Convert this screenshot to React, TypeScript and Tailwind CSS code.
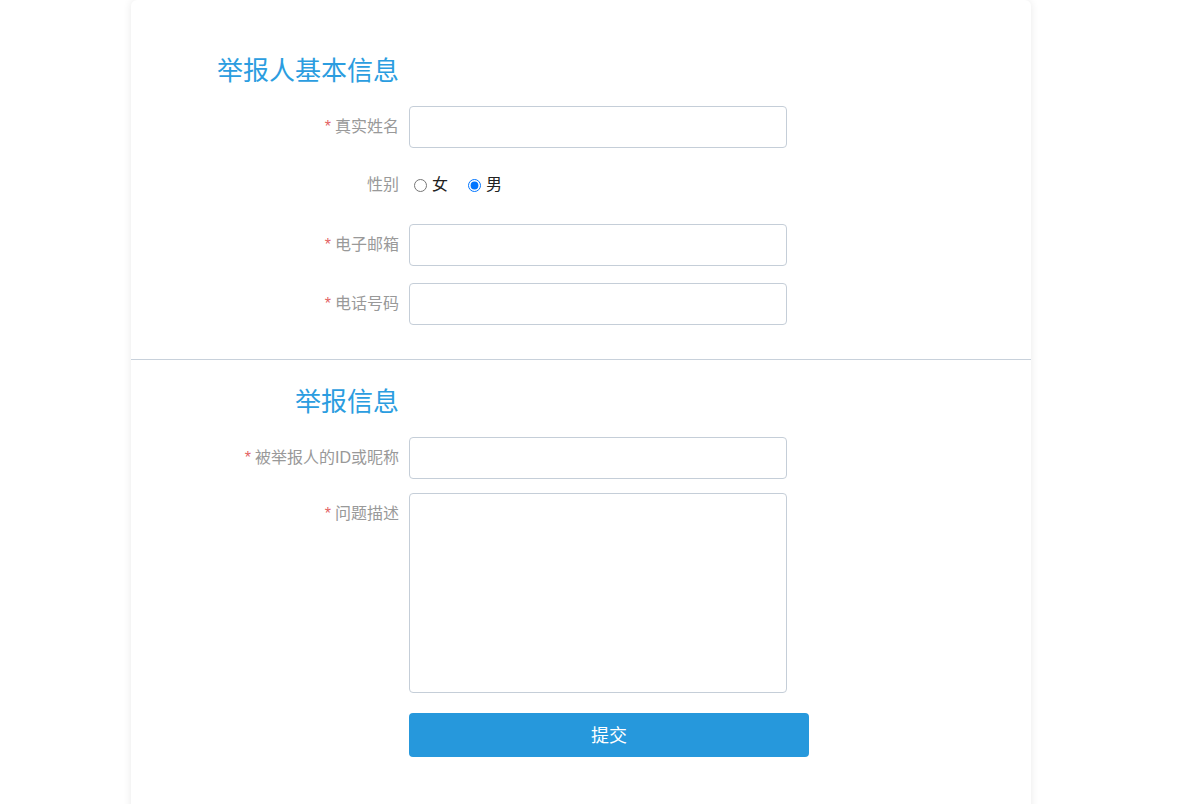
import React from "react";

const FONT = "font-['Liberation_Sans','Noto_Sans_CJK_SC',sans-serif]";

function Label({ text, required }: { text: string; required?: boolean }) {
  return (
    <div className="w-[278px] shrink-0 pr-[10px] text-right text-[16px] leading-[42px] text-[#999999]">
      {required && <span className="mr-[4px] text-[#e36363]">*</span>}
      {text}
    </div>
  );
}

function TextRow({ label, className }: { label: string; className?: string }) {
  return (
    <div className={`flex items-start ${className ?? ""}`}>
      <Label text={label} required />
      <input
        type="text"
        className="h-[42px] w-[378px] rounded-[4px] border border-[#c5ced8] bg-white px-3 text-[15px] outline-none"
      />
    </div>
  );
}

export default function App() {
  return (
    <div className={`min-h-screen bg-white ${FONT}`}>
      <div className="ml-[131px] w-[900px] rounded-t-[6px] bg-white pb-[60px] shadow-[0_0_8px_rgba(0,0,0,0.09)]">
        {/* 举报人基本信息 */}
        <div className="pt-[53px]">
          <div className="flex">
            <h2 className="w-[268px] text-right text-[26px] font-normal leading-[36px] text-[#2b9de0]">
              举报人基本信息
            </h2>
          </div>

          <TextRow label="真实姓名" className="mt-[17px]" />

          <div className="mt-[16px] flex h-[42px] items-center">
            <Label text="性别" />
            <label className="flex items-center text-[16px] text-[#222]">
              <input type="radio" name="gender" className="mx-[5px] mt-0 h-[13px] w-[13px]" />
              女
            </label>
            <label className="ml-[15px] flex items-center text-[16px] text-[#222]">
              <input
                type="radio"
                name="gender"
                defaultChecked
                className="mx-[5px] h-[13px] w-[13px]"
              />
              男
            </label>
          </div>

          <TextRow label="电子邮箱" className="mt-[18px]" />
          <TextRow label="电话号码" className="mt-[17px]" />
        </div>

        <div className="mt-[34px] h-px bg-[#c8d1db]" />

        {/* 举报信息 */}
        <div className="pt-[24px]">
          <div className="flex">
            <h2 className="w-[268px] text-right text-[26px] font-normal leading-[36px] text-[#2b9de0]">
              举报信息
            </h2>
          </div>

          <TextRow label="被举报人的ID或昵称" className="mt-[17px]" />

          <div className="mt-[14px] flex items-start">
            <Label text="问题描述" required />
            <textarea className="h-[200px] w-[378px] resize-none rounded-[4px] border border-[#c5ced8] bg-white px-3 py-2 text-[15px] outline-none" />
          </div>

          <div className="mt-[20px] flex">
            <div className="w-[278px] shrink-0" />
            <button className="h-[44px] w-[400px] rounded-[4px] bg-[#2698dc] pt-[3px] text-[18px] text-white">
              提交
            </button>
          </div>
        </div>
      </div>
    </div>
  );
}
